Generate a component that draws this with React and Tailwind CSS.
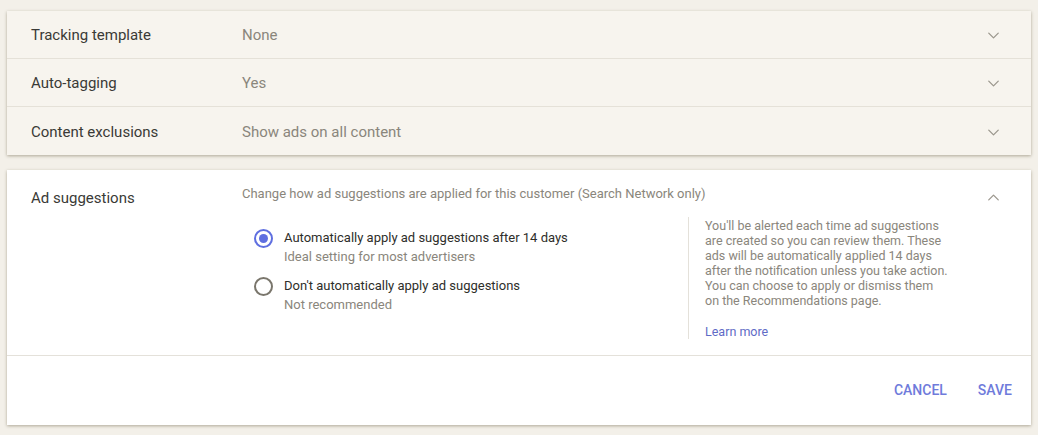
import { ChevronDown, ChevronUp } from 'lucide-react';

const rows = [
  { label: 'Tracking template', value: 'None' },
  { label: 'Auto-tagging', value: 'Yes' },
  { label: 'Content exclusions', value: 'Show ads on all content' },
];

const helpLines = [
  "You'll be alerted each time ad suggestions",
  'are created so you can review them. These',
  'ads will be automatically applied 14 days',
  'after the notification unless you take action.',
  'You can choose to apply or dismiss them',
  'on the Recommendations page.',
];

function Radio({ checked }) {
  return (
    <div
      className={
        'w-[19px] h-[19px] rounded-full border-2 flex items-center justify-center shrink-0 ' +
        (checked ? 'border-[#5f6fe0]' : 'border-[#7a766c]')
      }
    >
      {checked && <div className="w-[9px] h-[9px] rounded-full bg-[#5f6fe0]"></div>}
    </div>
  );
}

export default function App() {
  return (
    <div
      className="min-h-[435px] bg-[#f3f0e9] px-[7px] pt-[11px] pb-[10px]"
      style={{ fontFamily: 'Roboto, "Open Sans", sans-serif' }}
    >
      <div className="bg-[#f7f4ee] shadow-[0_1px_3px_rgba(90,80,50,0.45)]">
        {rows.map((row, i) => (
          <div
            key={row.label}
            className={
              'h-[48px] flex items-center pt-[2px] ' +
              (i < rows.length - 1 ? 'border-b border-[#e5e1d8]' : '')
            }
          >
            <div className="w-[235px] pl-[24px] text-[15px] text-[#3a3a36]">{row.label}</div>
            <div className="flex-1 text-[15px] text-[#8a867c]">{row.value}</div>
            <ChevronDown className="w-[19px] h-[19px] mr-[28px] text-[#9b978d]" strokeWidth={1.6} />
          </div>
        ))}
      </div>

      <div className="mt-[15px] bg-white shadow-[0_1px_3px_rgba(90,80,50,0.45)]">
        <div className="flex pt-[16px] pb-[16px] border-b border-[#e4e1da]">
          <div className="w-[235px] pl-[24px] text-[15px] text-[#3a3a36] pt-[1px]">Ad suggestions</div>
          <div className="flex-1">
            <div className="text-[13px] text-[#8a867c] leading-[15px]">
              Change how ad suggestions are applied for this customer (Search Network only)
            </div>
            <div className="flex mt-[16px]">
              <div className="w-[446px] pl-[12px] pt-[12px] flex flex-col gap-[11px]">
                <div className="flex gap-[11px]">
                  <Radio checked />
                  <div>
                    <div className="text-[13px] text-[#2e2e2a] leading-[20px] -mt-[1px]">
                      Automatically apply ad suggestions after 14 days
                    </div>
                    <div className="text-[13px] text-[#8a867c] leading-[18px]">
                      Ideal setting for most advertisers
                    </div>
                  </div>
                </div>
                <div className="flex gap-[11px]">
                  <Radio />
                  <div>
                    <div className="text-[13px] text-[#2e2e2a] leading-[20px] -mt-[1px]">
                      Don't automatically apply ad suggestions
                    </div>
                    <div className="text-[13px] text-[#8a867c] leading-[18px]">Not recommended</div>
                  </div>
                </div>
              </div>
              <div className="border-l border-[#e4e1da] pl-[16px] pt-[1px] w-[272px]">
                <div className="text-[12.5px] leading-[15px] text-[#8a867c]">
                  {helpLines.map((line) => (
                    <div key={line} className="whitespace-nowrap">
                      {line}
                    </div>
                  ))}
                </div>
                <div className="mt-[16px] text-[12.5px] leading-[15px] text-[#5f6bc6]">Learn more</div>
              </div>
            </div>
          </div>
          <ChevronUp className="w-[19px] h-[19px] mr-[28px] mt-[2px] text-[#9b978d]" strokeWidth={1.6} />
        </div>
        <div className="h-[69px] flex items-center justify-end gap-[31px] pr-[19px]">
          <button className="text-[14px] font-medium text-[#6f7bdb]">CANCEL</button>
          <button className="text-[14px] font-medium text-[#6f7bdb]">SAVE</button>
        </div>
      </div>
    </div>
  );
}
